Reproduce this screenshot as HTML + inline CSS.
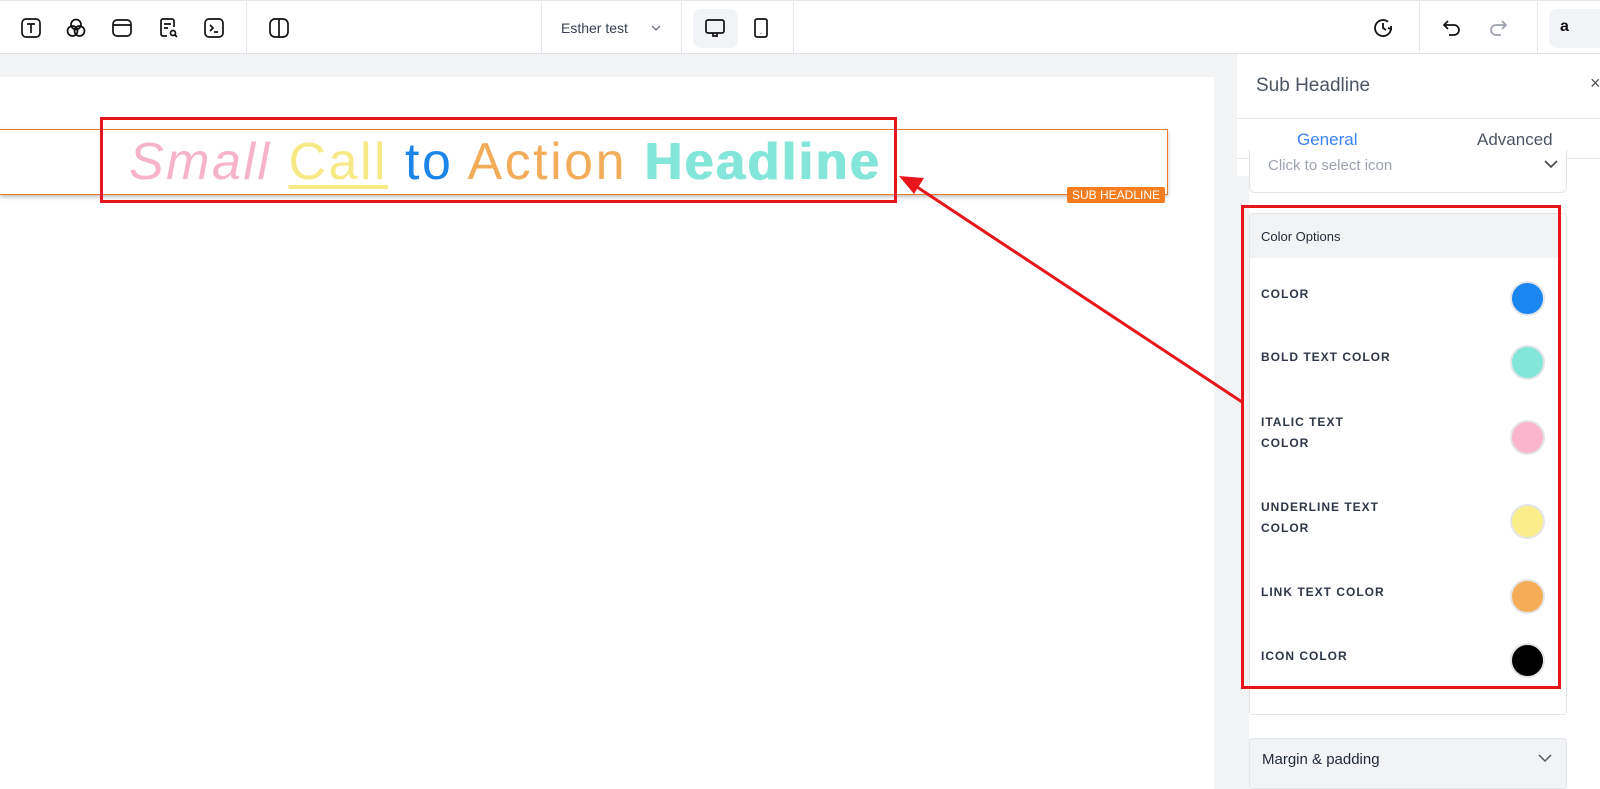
<!DOCTYPE html>
<html><head><meta charset="utf-8"><style>
*{margin:0;padding:0;box-sizing:border-box}
body{width:1600px;height:789px;overflow:hidden;position:relative;background:#f2f3f5;font-family:"Liberation Sans",sans-serif}
.abs{position:absolute}
.top{left:0;top:0;width:1600px;height:54px;background:#fff;border-top:1px solid #e5e7eb;border-bottom:1px solid #dfe2e6}
.vl{position:absolute;top:1px;width:1px;height:52px;background:#e5e7eb}
.ic{position:absolute;top:16px}
.lbl{position:absolute;left:1261px;font-size:12px;font-weight:bold;letter-spacing:1px;color:#2d3748;line-height:21px}
.sw{position:absolute;left:1510px;width:35px;height:35px;border-radius:50%;border:2px solid #e3e5e8}
</style></head><body>
<div class="abs top">
 <svg class="ic" style="left:20px" width="22" height="22" viewBox="0 0 22 22" fill="none" stroke="#111" stroke-width="1.7"><rect x="2" y="2" width="18" height="18" rx="4"/><path d="M7 7h8M11 7v9"/></svg>
 <svg class="ic" style="left:65px" width="22" height="22" viewBox="0 0 22 22" fill="none" stroke="#111" stroke-width="1.7"><circle cx="11" cy="7.5" r="5"/><circle cx="7.5" cy="14" r="5"/><circle cx="14.5" cy="14" r="5"/></svg>
 <svg class="ic" style="left:111px" width="22" height="22" viewBox="0 0 22 22" fill="none" stroke="#111" stroke-width="1.7"><rect x="2" y="3" width="18" height="16" rx="4"/><path d="M2 8h18"/></svg>
 <svg class="ic" style="left:158px" width="22" height="22" viewBox="0 0 22 22" fill="none" stroke="#111" stroke-width="1.7"><path d="M9 19H5a2 2 0 0 1-2-2V4a2 2 0 0 1 2-2h9a2 2 0 0 1 2 2v6M6 7h7M6 11h4"/><circle cx="15" cy="16" r="2.5"/><path d="M17 18l2 2"/></svg>
 <svg class="ic" style="left:203px" width="22" height="22" viewBox="0 0 22 22" fill="none" stroke="#111" stroke-width="1.7"><rect x="2" y="2" width="18" height="18" rx="4"/><path d="M7 8l3 3-3 3M11 15h4"/></svg>
 <div class="vl" style="left:246px"></div>
 <svg class="ic" style="left:268px" width="22" height="22" viewBox="0 0 22 22" fill="none" stroke="#111" stroke-width="1.7"><rect x="2" y="2" width="18" height="18" rx="5"/><path d="M11 2v18"/></svg>
 <div class="vl" style="left:541px"></div>
 <div class="abs" style="left:561px;top:19px;font-size:14px;color:#374151">Esther test</div>
 <svg class="abs" style="left:651px;top:23px" width="10" height="8" viewBox="0 0 10 8" fill="none" stroke="#6b7280" stroke-width="1.3"><path d="M1 2l4 4 4-4"/></svg>
 <div class="vl" style="left:681px"></div>
 <div class="abs" style="left:693px;top:8px;width:45px;height:39px;border-radius:8px;background:#f1f3f6"></div>
 <svg class="ic" style="left:704px" width="22" height="22" viewBox="0 0 22 22" fill="none" stroke="#111" stroke-width="1.7"><rect x="2" y="3" width="18" height="13" rx="2"/><path d="M9 16v3h4v-3"/></svg>
 <svg class="ic" style="left:750px" width="22" height="22" viewBox="0 0 22 22" fill="none" stroke="#111" stroke-width="1.7"><rect x="5" y="2" width="12" height="18" rx="2"/><path d="M11 16v.5"/></svg>
 <div class="vl" style="left:793px"></div>
 <svg class="ic" style="left:1372px" width="22" height="22" viewBox="0 0 22 22" fill="none" stroke="#111" stroke-width="1.8"><path d="M19 11a8 8 0 1 1-3-6.2"/><path d="M11 6v5l3 2M19 9l0 3-3-1"/></svg>
 <div class="vl" style="left:1419px"></div>
 <svg class="ic" style="left:1441px" width="22" height="22" viewBox="0 0 22 22" fill="none" stroke="#111" stroke-width="1.7"><path d="M7 4L3 8l4 4M3 8h10a5 5 0 0 1 0 10H8"/></svg>
 <svg class="ic" style="left:1487px" width="22" height="22" viewBox="0 0 22 22" fill="none" stroke="#9ca3af" stroke-width="1.7"><path d="M15 4l4 4-4 4M19 8H9a5 5 0 0 0 0 10h5"/></svg>
 <div class="vl" style="left:1537px"></div>
 <div class="abs" style="left:1549px;top:8px;width:51px;height:39px;border-radius:8px 0 0 8px;background:#f1f3f6"></div>
 <div class="abs" style="left:1560px;top:17px;font-size:16px;font-weight:bold;color:#111">a</div>
</div>

<div class="abs" style="left:0;top:77px;width:1214px;height:712px;background:#fff"></div>
<div class="abs" style="left:0;top:129px;width:1168px;height:66px;border:1px solid #f07b27;border-left:none;box-shadow:0 2px 4px rgba(0,0,0,.25)"></div>
<div class="abs" style="left:1067px;top:187px;width:98px;height:16px;background:#f57c1f;color:#fff;font-size:12px;line-height:16px;text-align:center;border-radius:2px">SUB HEADLINE</div>
<div class="abs" style="left:129px;top:132px;font-size:52px;line-height:60px;white-space:nowrap;letter-spacing:2.5px">
<i style="color:#f7b3cc">Small</i> <u style="color:#f7ea86;text-decoration-thickness:4px;text-underline-offset:6px">Call</u> <span style="color:#1c85ea">to</span> <span style="color:#f3ad5a">Action</span> <b style="color:#84e6d8;font-weight:bold;text-shadow:1px 0 0 #84e6d8,1.5px 0 0 #84e6d8">Headline</b></div>
<div class="abs" style="left:100px;top:117px;width:797px;height:86px;border:3px solid #e8151b"></div>

<div class="abs" style="left:1237px;top:54px;width:363px;height:735px;background:#fff"></div>
<div class="abs" style="left:1237px;top:176px;width:12px;height:613px;background:#f2f3f5"></div>
<div class="abs" style="left:1256px;top:75px;font-size:19px;color:#4b5563">Sub Headline</div>
<div class="abs" style="left:1590px;top:73px;font-size:18px;color:#555">×</div>
<div class="abs" style="left:1237px;top:118px;width:363px;height:1px;background:#e5e7eb"></div>
<div class="abs" style="left:1297px;top:130px;font-size:17px;color:#3b82f6">General</div>
<div class="abs" style="left:1477px;top:130px;font-size:17px;color:#4b5563">Advanced</div>
<div class="abs" style="left:1237px;top:158px;width:363px;height:1px;background:#e5e7eb"></div>
<div class="abs" style="left:1254px;top:156px;width:172px;height:2px;background:#3b82f6"></div>
<div class="abs" style="left:1249px;top:150px;width:318px;height:43px;border:1px solid #dfe2e6;border-top:none;border-radius:0 0 6px 6px;overflow:hidden;background:#fff"><div style="position:absolute;left:18px;top:7px;font-size:15px;color:#9ca3af">Click to select icon</div><svg style="position:absolute;right:8px;top:10px" width="14" height="9" viewBox="0 0 14 9" fill="none" stroke="#444" stroke-width="1.6"><path d="M1 1l6 6 6-6"/></svg></div>
<div class="abs" style="left:1249px;top:213px;width:318px;height:502px;border:1px solid #e3e5e8;border-radius:3px"></div>
<div class="abs" style="left:1250px;top:214px;width:308px;height:44px;background:#f2f3f5"></div>
<div class="abs" style="left:1261px;top:229px;font-size:13px;color:#1f2937">Color Options</div>
<div class="lbl" style="top:284px">COLOR</div>
<div class="sw" style="top:281px;background:#1a87f0"></div>
<div class="lbl" style="top:347px">BOLD TEXT COLOR</div>
<div class="sw" style="top:345px;background:#84e6d8"></div>
<div class="lbl" style="top:412px">ITALIC TEXT<br>COLOR</div>
<div class="sw" style="top:420px;background:#f9b5cc"></div>
<div class="lbl" style="top:497px">UNDERLINE TEXT<br>COLOR</div>
<div class="sw" style="top:504px;background:#f9ee8a"></div>
<div class="lbl" style="top:582px">LINK TEXT COLOR</div>
<div class="sw" style="top:579px;background:#f5ac57"></div>
<div class="lbl" style="top:646px">ICON COLOR</div>
<div class="sw" style="top:643px;background:#000"></div>
<div class="abs" style="left:1241px;top:205px;width:320px;height:484px;border:3px solid #e8151b"></div>
<div class="abs" style="left:1249px;top:738px;width:318px;height:51px;background:#f2f3f5;border:1px solid #e3e5e8;border-radius:3px"></div>
<div class="abs" style="left:1262px;top:751px;font-size:15px;color:#1f2937">Margin &amp; padding</div>
<svg class="abs" style="left:1538px;top:754px" width="14" height="9" viewBox="0 0 14 9" fill="none" stroke="#555" stroke-width="1.5"><path d="M1 1l6 6 6-6"/></svg>

<svg class="abs" style="left:0;top:0" width="1600" height="789"><line x1="1242" y1="402" x2="914" y2="185" stroke="#e8151b" stroke-width="3"/><polygon points="899,176 924,178 914,194" fill="#e8151b"/></svg>
</body></html>
